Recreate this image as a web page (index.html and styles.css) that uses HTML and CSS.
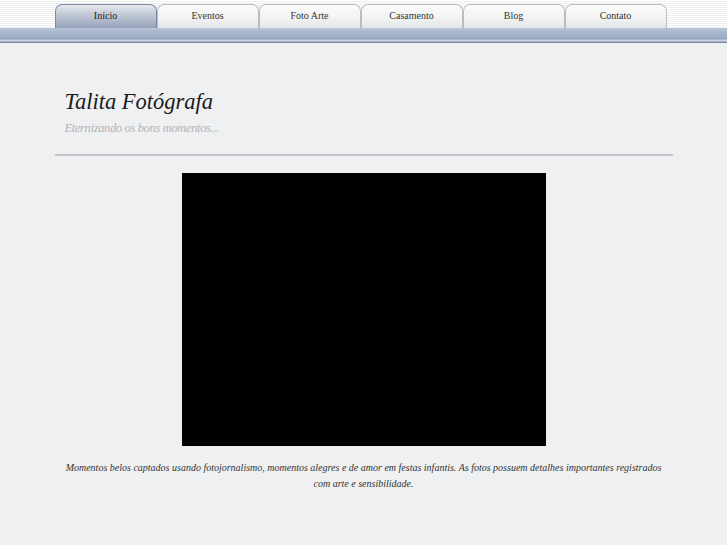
FILE: index.html
```html
<!DOCTYPE html>
<html lang="pt">
<head>
<meta charset="utf-8">
<title>Talita Fotógrafa</title>
<link rel="stylesheet" href="styles.css">
</head>
<body>
<div class="top">
  <nav class="tabs">
    <a class="tab active">Início</a>
    <a class="tab">Eventos</a>
    <a class="tab">Foto Arte</a>
    <a class="tab">Casamento</a>
    <a class="tab">Blog</a>
    <a class="tab">Contato</a>
  </nav>
</div>
<div class="bar"></div>
<main class="page">
  <header class="head">
    <h1 class="title">Talita Fotógrafa</h1>
    <p class="tagline">Eternizando os bons momentos...</p>
  </header>
  <div class="media"><div class="video"></div></div>
  <p class="caption">Momentos belos captados usando fotojornalismo, momentos alegres e de amor em festas infantis. As fotos possuem detalhes importantes registrados com arte e sensibilidade.</p>
</main>
</body>
</html>
```
FILE: styles.css
```css
html, body { margin: 0; padding: 0; }
body {
  background: #eff0f2;
  font-family: "Liberation Serif", "DejaVu Serif", serif;
  color: #333;
}
.top {
  height: 28px;
  background: repeating-linear-gradient(to bottom, #ffffff 0, #ffffff 1px, #eceef0 1px, #eceef0 2px);
  display: flex;
  justify-content: center;
}
.tabs {
  width: 618px;
  display: flex;
  align-items: flex-end;
}
.tab {
  box-sizing: border-box;
  width: 102px;
  height: 24px;
  border: 1px solid #b9bcc2;
  border-bottom: none;
  border-radius: 7px 7px 0 0;
  background: linear-gradient(to bottom, #fbfbfb 0%, #f2f3f3 55%, #e3e5e7 100%);
  font-size: 10px;
  color: #333;
  text-align: center;
  line-height: 22px;
  text-decoration: none;
}
.tab.active {
  border-color: #7c8aa2;
  background: linear-gradient(to bottom, #e6e9ee 0%, #c3cad6 40%, #94a1b8 100%);
  color: #222;
}
.bar {
  height: 15px;
  background: linear-gradient(to bottom, #b9c5da 0px, #a9b7cf 4px, #9fadc6 9px, #95a3bd 11px, #c4cde0 12px, #d0d8e8 13px, #7f8aa0 14px, #7f8aa0 15px);
}
.page {
  width: 618px;
  margin: 0 auto;
}
.head {
  padding: 45px 10px 0;
  height: 66px;
  border-bottom: 2px solid #c4c5c8;
  margin-bottom: 17px;
}
.title {
  margin: 0;
  font-family: "Liberation Serif", serif;
  font-style: italic;
  font-weight: normal;
  font-size: 22.5px;
  line-height: 28px;
  color: #1a1a1a;
}
.tagline {
  margin: 5px 0 0;
  font-style: italic;
  font-size: 12.5px;
  letter-spacing: -0.35px;
  color: #b3b4b7;
}
.media {
  display: flex;
  justify-content: center;
}
.video {
  width: 364px;
  height: 273px;
  background: #000;
}
.caption {
  margin: 14px 0 0;
  padding: 0 8px;
  text-align: center;
  font-style: italic;
  font-size: 10px;
  line-height: 16px;
  color: #333;
}
```
